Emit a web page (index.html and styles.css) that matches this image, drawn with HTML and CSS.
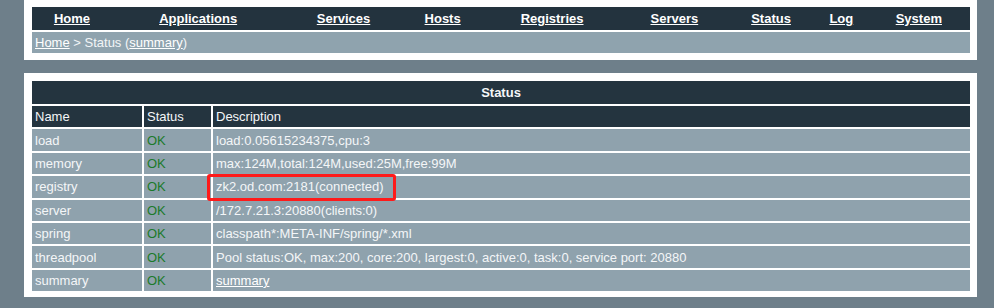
FILE: index.html
```html
<!DOCTYPE html>
<html lang="en">
<head>
  <meta charset="UTF-8" />
  <title>Status</title>
  <link rel="stylesheet" href="styles.css">
</head>
<body>
  <div class="box top">
    <table class="nav">
      <tr>
        <td><a href="#">Home</a></td>
        <td><a href="#">Applications</a></td>
        <td><a href="#">Services</a></td>
        <td><a href="#">Hosts</a></td>
        <td><a href="#">Registries</a></td>
        <td><a href="#">Servers</a></td>
        <td><a href="#">Status</a></td>
        <td><a href="#">Log</a></td>
        <td><a href="#">System</a></td>
      </tr>
    </table>
    <div class="crumb"><a href="#">Home</a> &gt; Status (<a href="#">summary</a>)</div>
  </div>

  <div class="box main">
    <table class="list">
      <tr>
        <th colspan="3" class="title">Status</th>
      </tr>
      <tr>
        <th class="col-name">Name</th>
        <th class="col-status">Status</th>
        <th>Description</th>
      </tr>
      <tr><td>load</td><td class="ok">OK</td><td>load:0.05615234375,cpu:3</td></tr>
      <tr><td>memory</td><td class="ok">OK</td><td>max:124M,total:124M,used:25M,free:99M</td></tr>
      <tr><td>registry</td><td class="ok">OK</td><td><span class="mark">zk2.od.com:2181(connected)</span></td></tr>
      <tr><td>server</td><td class="ok">OK</td><td>/172.7.21.3:20880(clients:0)</td></tr>
      <tr><td>spring</td><td class="ok">OK</td><td>classpath*:META-INF/spring/*.xml</td></tr>
      <tr><td>threadpool</td><td class="ok">OK</td><td>Pool status:OK, max:200, core:200, largest:0, active:0, task:0, service port: 20880</td></tr>
      <tr><td>summary</td><td class="ok">OK</td><td><a href="#">summary</a></td></tr>
    </table>
  </div>
</body>
</html>
```

FILE: styles.css
```css
* {
  margin: 0;
  padding: 0;
  box-sizing: border-box;
}

body {
  font-family: "Liberation Sans", Arial, sans-serif;
  font-size: 13px;
  background-color: #6e7f8a;
  padding: 0 17px 0 24px;
}

a {
  color: #ffffff;
}

.box {
  background-color: #ffffff;
}

.top {
  padding: 7px 7px 7px 8px;
  margin-bottom: 13px;
}

.nav {
  width: 100%;
  height: 23px;
  border-collapse: collapse;
  background-color: #23333e;
}

.nav td {
  text-align: center;
  font-weight: bold;
  padding: 0;
}

.crumb {
  margin-top: 2px;
  height: 21px;
  line-height: 21px;
  padding-left: 3px;
  color: #f2f5f7;
  background-color: #8fa3ae;
}

.main {
  padding: 6px 5px 4px 6px;
}

.list {
  width: 100%;
  border-spacing: 2px;
}

.list th,
.list td {
  height: 21.4px;
  padding: 0 3px;
  text-align: left;
  font-weight: normal;
  color: #f4f6f8;
  white-space: nowrap;
}

.list th {
  background-color: #24343f;
}

.list th.title {
  height: 23px;
  text-align: center;
  font-weight: bold;
}

.list td {
  background-color: #8fa2ad;
}

.col-name {
  width: 110px;
}

.col-status {
  width: 67px;
}

.list td.ok {
  color: #1b7a2a;
}

.mark {
  position: relative;
}

.mark::after {
  content: "";
  position: absolute;
  left: -9px;
  right: -12px;
  top: -5px;
  bottom: -7px;
  border: 3px solid #ff1a1a;
  border-radius: 3px;
}
```
